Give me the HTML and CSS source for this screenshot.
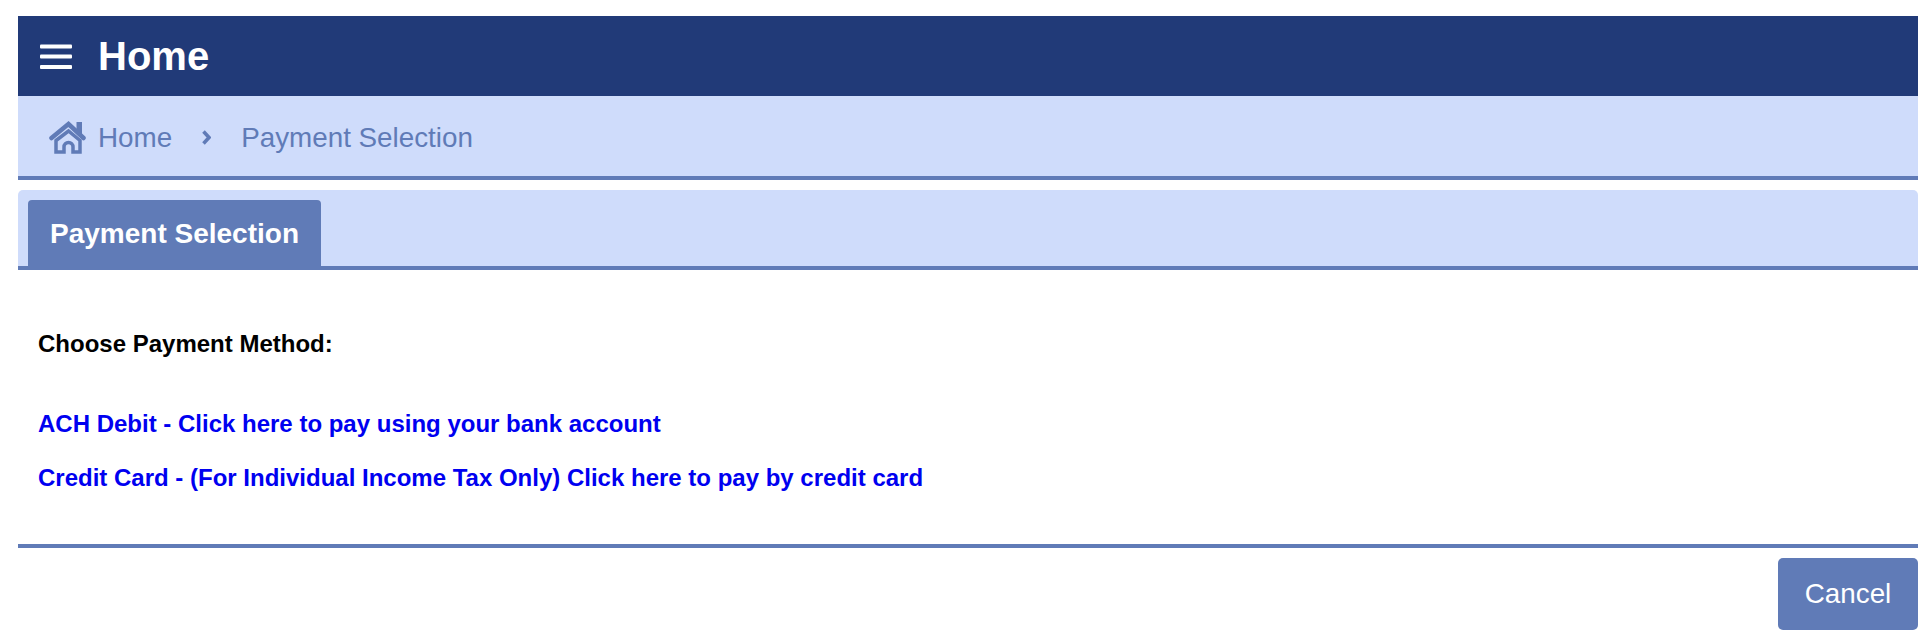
FILE: index.html

```html
<!DOCTYPE html>
<html lang="en">
<head>
    <meta charset="UTF-8">
    <title>Payment Selection</title>
    <link rel="stylesheet" href="styles.css">
</head>
<body>
    <header class="title-bar">
        <svg class="menu-icon" width="32" height="25" viewBox="0 0 32 25">
            <rect x="0" y="0.5" width="32" height="4" rx="1"/>
            <rect x="0" y="10.5" width="32" height="4" rx="1"/>
            <rect x="0" y="21" width="32" height="4" rx="1"/>
        </svg>
        <h1>Home</h1>
    </header>

    <nav class="breadcrumb">
        <svg class="home-icon" width="37" height="33" viewBox="0 0 37 33">
            <path class="home-chimney" d="M27.500 1h5.500v12h-5.500z"/>
            <path class="home-roof" d="M2.500 17 19.500 3 34.500 17"/>
            <path class="home-walls" d="M7 19.500 19.500 10 31 19.500V31H24V26a4.500 4.500 0 0 0-9 0v5H7Z"/>
        </svg>
        <a href="#">Home</a>
        <svg class="crumb-sep" width="9" height="15" viewBox="0 0 9 15">
            <path d="M1.500 1.500 7 7.500 1.500 13.500"/>
        </svg>
        <a href="#">Payment Selection</a>
    </nav>

    <div class="tab-bar">
        <div class="tab">Payment Selection</div>
    </div>

    <main class="content">
        <p class="prompt">Choose Payment Method:</p>
        <p class="method"><a href="#">ACH Debit - Click here to pay using your bank account</a></p>
        <p class="method"><a href="#">Credit Card - (For Individual Income Tax Only) Click here to pay by credit card</a></p>
    </main>

    <footer class="actions">
        <button>Cancel</button>
    </footer>
</body>
</html>
```

FILE: styles.css

```css
body {
    margin: 0;
    padding: 16px 12px 0 18px;
    font-family: "Liberation Sans", Arial, sans-serif;
    background: white;
}
.title-bar {
    display: flex;
    align-items: center;
    height: 80px;
    padding-left: 22px;
    background-color: #213a78;
    color: white;
}
.title-bar h1 {
    margin: 0 0 0 26px;
    font-size: 40px;
    font-weight: bold;
}
.menu-icon {
    fill: white;
    filter: blur(0.5px);
}
.breadcrumb {
    display: flex;
    align-items: center;
    height: 80px;
    padding-left: 31px;
    background-color: #cfdcfb;
    border-bottom: 4px solid #607bb7;
    font-size: 27.800px;
}
.breadcrumb a {
    padding-top: 3px;
    color: #607bb7;
    text-decoration: none;
}
.home-icon {
    margin: 2px 12px 0 0;
    filter: blur(0.5px);
}
.home-chimney {
    fill: #607bb7;
}
.home-roof, .home-walls, .crumb-sep path {
    fill: none;
    stroke: #607bb7;
}
.home-roof {
    stroke-width: 4.500px;
    stroke-linecap: round;
}
.home-walls {
    stroke-width: 3.500px;
}
.crumb-sep {
    margin: 2px 30px 0;
    filter: blur(0.4px);
}
.crumb-sep path {
    stroke-width: 3.500px;
}
.tab-bar {
    display: flex;
    height: 66px;
    margin-top: 10px;
    padding: 10px 0 0 10px;
    background-color: #cfdcfb;
    border-bottom: 4px solid #607bb7;
    border-radius: 5px 5px 0 0;
}
.tab {
    padding: 0 22px;
    line-height: 67px;
    background-color: #607bb7;
    border-radius: 4px 4px 0 0;
    color: white;
    font-size: 28px;
    font-weight: bold;
}
.content {
    padding: 59px 20px 51px;
    border-bottom: 4px solid #607bb7;
    font-size: 24px;
    font-weight: bold;
    line-height: 30px;
}
.content p {
    margin: 0;
}
.prompt {
    color: black;
}
.content .method {
    margin-top: 24px;
}
.content .prompt + .method {
    margin-top: 50px;
}
.method a {
    color: #0000f0;
    text-decoration: none;
}
.actions {
    display: flex;
    justify-content: flex-end;
    padding-top: 10px;
}
.actions button {
    width: 140px;
    height: 72px;
    border: none;
    border-radius: 5px;
    background-color: #607bb7;
    color: white;
    font-family: inherit;
    font-size: 27.800px;
}
```
